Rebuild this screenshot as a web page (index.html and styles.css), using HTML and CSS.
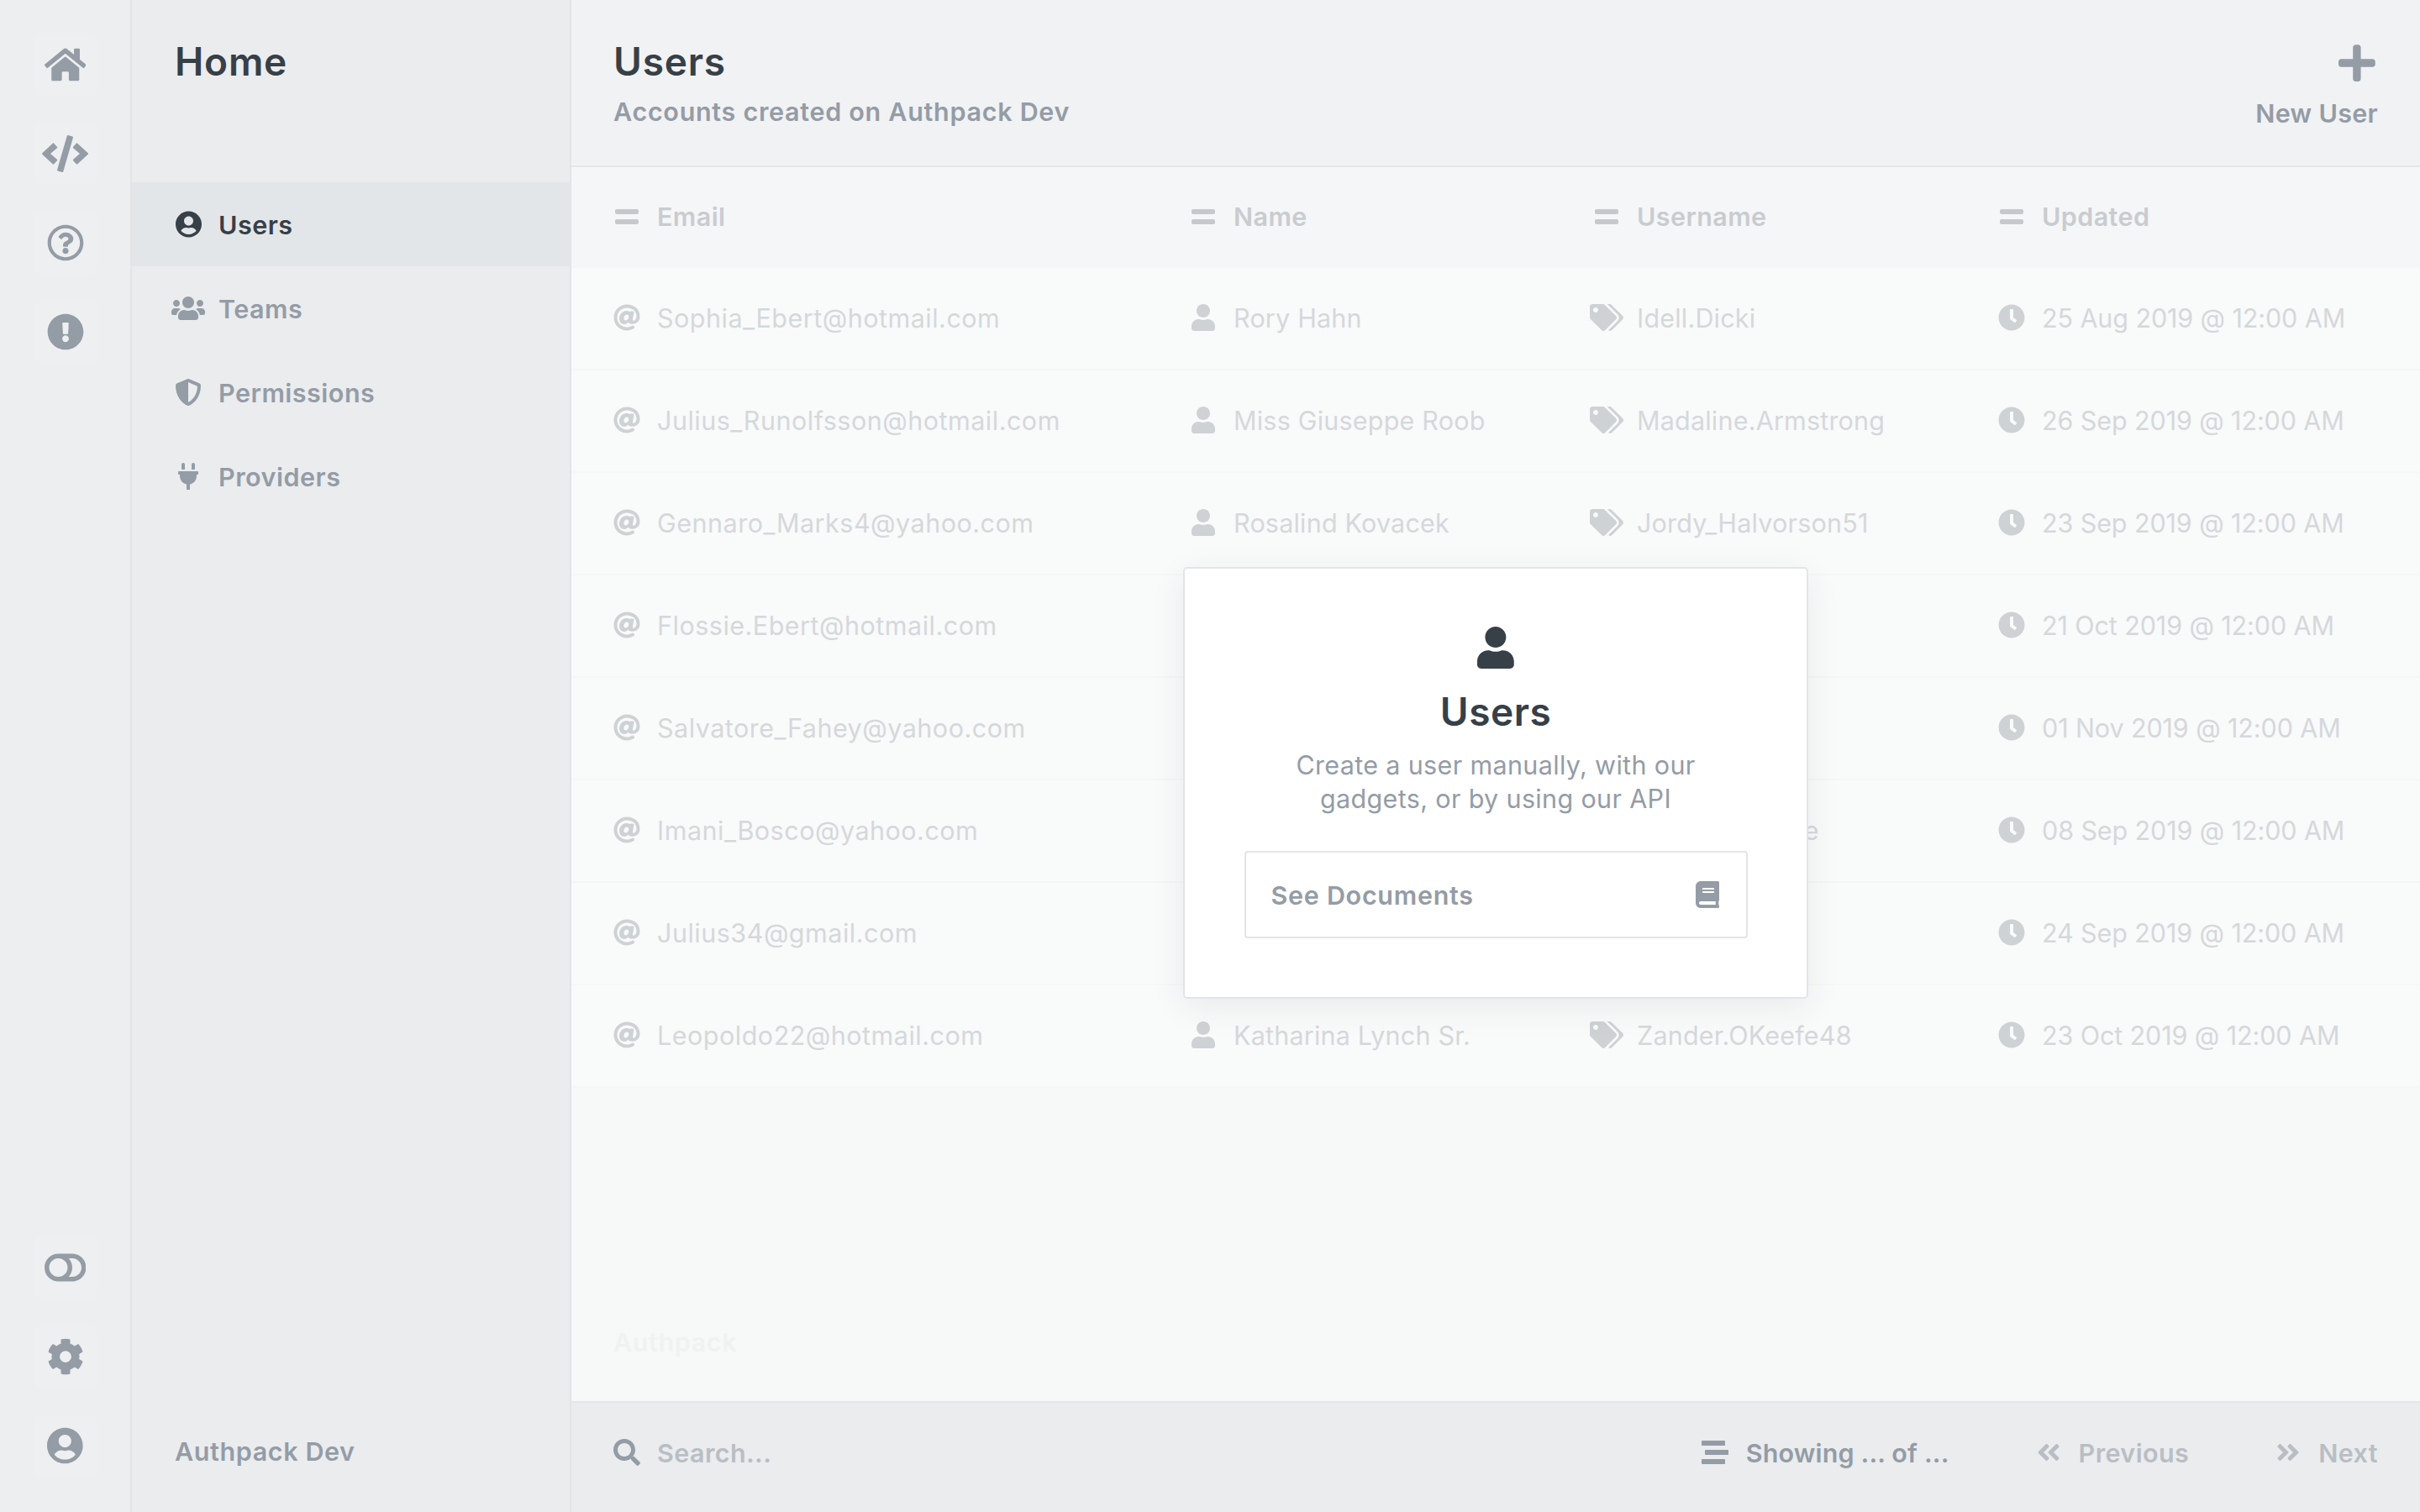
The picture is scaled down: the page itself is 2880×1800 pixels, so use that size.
FILE: index.html
```html
<!DOCTYPE html>
<html lang="en">
<head>
  <meta charset="UTF-8">
  <title>Authpack - Users</title>
  <link rel="stylesheet" href="styles.css">
</head>
<body>
  <svg class="sprite" xmlns="http://www.w3.org/2000/svg">
    <defs>
      <path id="home" d="M280.37 148.26L96 300.11V464a16 16 0 0 0 16 16l112.06-.29a16 16 0 0 0 15.92-16V368a16 16 0 0 1 16-16h64a16 16 0 0 1 16 16v95.64a16 16 0 0 0 16 16.05L464 480a16 16 0 0 0 16-16V300L295.67 148.26a12.19 12.19 0 0 0-15.3 0zM571.6 251.47L488 182.56V44.05a12 12 0 0 0-12-12h-56a12 12 0 0 0-12 12v72.61L318.47 43a48 48 0 0 0-61 0L4.34 251.47a12 12 0 0 0-1.6 16.9l25.5 31A12 12 0 0 0 45.15 301l235.22-193.74a12.19 12.19 0 0 1 15.3 0L530.9 301a12 12 0 0 0 16.9-1.6l25.5-31a12 12 0 0 0-1.7-16.93z"/>
      <path id="code" d="M278.9 511.5l-61-17.7c-6.4-1.8-10-8.5-8.2-14.9L346.2 8.7c1.8-6.4 8.5-10 14.9-8.2l61 17.7c6.4 1.8 10 8.5 8.2 14.9L293.8 503.3c-1.9 6.4-8.5 10.1-14.9 8.2zm-114-112.2l43.5-46.4c4.6-4.9 4.3-12.7-.8-17.2L117 256l90.6-79.7c5.1-4.5 5.5-12.3.8-17.2l-43.5-46.4c-4.5-4.8-12.1-5.1-17-.5L3.8 247.2c-5.1 4.7-5.1 12.8 0 17.5l144.1 135.1c4.9 4.6 12.5 4.4 17-.5zm327.2.6l144.1-135.1c5.1-4.7 5.1-12.8 0-17.5L492.1 112.1c-4.8-4.5-12.4-4.3-17 .5L431.6 159c-4.6 4.9-4.3 12.7.8 17.2L523 256l-90.6 79.7c-5.1 4.5-5.5 12.3-.8 17.2l43.5 46.4c4.5 4.9 12.1 5.1 17 .6z"/>
      <path id="question" d="M256 8C119.043 8 8 119.083 8 256c0 136.997 111.043 248 248 248s248-111.003 248-248C504 119.083 392.957 8 256 8zm0 448c-110.532 0-200-89.431-200-200 0-110.495 89.472-200 200-200 110.491 0 200 89.471 200 200 0 110.53-89.431 200-200 200zm107.244-255.2c0 67.052-72.421 68.084-72.421 92.863V300c0 6.627-5.373 12-12 12h-45.647c-6.627 0-12-5.373-12-12v-8.659c0-35.745 27.1-50.034 47.579-61.516 17.561-9.845 28.324-16.541 28.324-29.579 0-17.246-21.999-28.693-39.784-28.693-23.189 0-33.894 10.977-48.942 29.969-4.057 5.12-11.46 6.071-16.666 2.124l-27.824-21.098c-5.107-3.872-6.251-11.066-2.644-16.363C184.846 131.491 214.94 112 261.794 112c49.071 0 101.45 38.304 101.45 88.8zM298 368c0 23.159-18.841 42-42 42s-42-18.841-42-42 18.841-42 42-42 42 18.841 42 42z"/>
      <path id="alert" d="M504 256c0 136.997-111.043 248-248 248S8 392.997 8 256C8 119.083 119.043 8 256 8s248 111.083 248 248zm-248 50c-25.405 0-46 20.595-46 46s20.595 46 46 46 46-20.595 46-46-20.595-46-46-46zm-43.673-165.346l7.418 136c.347 6.364 5.609 11.346 11.982 11.346h48.546c6.373 0 11.635-4.982 11.982-11.346l7.418-136c.375-6.874-5.098-12.654-11.982-12.654h-63.383c-6.884 0-12.356 5.78-11.981 12.654z"/>
      <path id="toggle" d="M384 64H192C86 64 0 150 0 256s86 192 192 192h192c106 0 192-86 192-192S490 64 384 64zM64 256c0-70.7 57.3-128 128-128s128 57.3 128 128-57.3 128-128 128S64 326.7 64 256zm320 128h-48.9c65.2-72.8 65.2-183.1 0-256H384c70.7 0 128 57.3 128 128s-57.3 128-128 128z"/>
      <path id="cog" d="M487.4 315.7l-42.6-24.6c4.3-23.2 4.3-47 0-70.2l42.6-24.6c4.9-2.8 7.1-8.6 5.5-14-11.1-35.6-30-67.8-54.7-94.6-3.8-4.1-10-5.1-14.8-2.3L380.8 110c-17.9-15.4-38.5-27.3-60.8-35.1V25.8c0-5.6-3.9-10.5-9.4-11.7-36.7-8.2-74.3-7.8-109.2 0-5.5 1.2-9.4 6.1-9.4 11.7V75c-22.2 7.9-42.8 19.8-60.8 35.1L88.7 85.5c-4.9-2.8-11-1.9-14.8 2.3-24.7 26.7-43.6 58.9-54.7 94.6-1.7 5.4.6 11.2 5.5 14L67.3 221c-4.3 23.2-4.3 47 0 70.2l-42.6 24.6c-4.9 2.8-7.1 8.6-5.5 14 11.1 35.6 30 67.8 54.7 94.6 3.8 4.1 10 5.1 14.8 2.3l42.6-24.6c17.9 15.4 38.5 27.3 60.8 35.1v49.2c0 5.6 3.9 10.5 9.4 11.7 36.7 8.2 74.3 7.8 109.2 0 5.5-1.2 9.4-6.1 9.4-11.7v-49.2c22.2-7.9 42.8-19.8 60.8-35.1l42.6 24.6c4.9 2.8 11 1.9 14.8-2.3 24.7-26.7 43.6-58.9 54.7-94.6 1.5-5.5-.7-11.3-5.6-14.1zM256 336c-44.1 0-80-35.9-80-80s35.9-80 80-80 80 35.9 80 80-35.9 80-80 80z"/>
      <path id="user-circle" d="M248 8C111 8 0 119 0 256s111 248 248 248 248-111 248-248S385 8 248 8zm0 96c48.6 0 88 39.4 88 88s-39.4 88-88 88-88-39.4-88-88 39.4-88 88-88zm0 344c-58.7 0-111.3-26.6-146.5-68.2 18.8-35.4 55.6-59.8 98.5-59.8 2.4 0 4.8.4 7.1 1.1 13 4.2 26.6 6.9 40.9 6.9 14.3 0 28-2.7 40.9-6.9 2.3-.7 4.7-1.1 7.1-1.1 42.9 0 79.7 24.4 98.5 59.8C359.3 421.4 306.7 448 248 448z"/>
      <path id="users" d="M96 224c35.3 0 64-28.7 64-64s-28.7-64-64-64-64 28.7-64 64 28.7 64 64 64zm448 0c35.3 0 64-28.7 64-64s-28.7-64-64-64-64 28.7-64 64 28.7 64 64 64zm32 32h-64c-17.6 0-33.5 7.1-45.1 18.6 40.3 22.1 68.9 62 75.1 109.4h66c17.7 0 32-14.3 32-32v-32c0-35.3-28.7-64-64-64zm-256 0c61.9 0 112-50.1 112-112S381.9 32 320 32 208 82.1 208 144s50.1 112 112 112zm76.8 32h-8.3c-20.8 10-43.9 16-68.5 16s-47.6-6-68.5-16h-8.3C179.6 288 128 339.6 128 403.2V432c0 26.5 21.5 48 48 48h288c26.5 0 48-21.5 48-48v-28.8c0-63.6-51.6-115.2-115.2-115.2zm-223.7-13.4C161.5 263.1 145.6 256 128 256H64c-35.3 0-64 28.7-64 64v32c0 17.7 14.3 32 32 32h65.9c6.3-47.4 34.9-87.3 75.2-109.4z"/>
      <path id="shield" d="M466.5 83.7l-192-80a48.15 48.15 0 0 0-36.9 0l-192 80C27.7 91.1 16 108.6 16 128c0 198.5 114.5 335.7 221.5 380.3 11.8 4.9 25.1 4.9 36.9 0C360.1 472.6 496 349.3 496 128c0-19.4-11.7-36.9-29.5-44.3zM256.1 446.3l-.1-381 175.9 73.3c-3.3 151.4-82.1 261.1-175.8 307.7z"/>
      <path id="plug" d="M320,32a32,32,0,0,0-64,0v96h64Zm48,128H16A16,16,0,0,0,0,176v32a16,16,0,0,0,16,16H32v32A160.07,160.07,0,0,0,160,412.8V512h64V412.8A160.07,160.07,0,0,0,352,256V224h16a16,16,0,0,0,16-16V176A16,16,0,0,0,368,160ZM128,32a32,32,0,0,0-64,0v96h64Z"/>
      <path id="at" d="M256 8C118.941 8 8 118.919 8 256c0 137.059 110.919 248 248 248 48.154 0 95.342-14.14 135.408-40.223 12.005-7.815 14.625-24.288 5.552-35.372l-10.177-12.433c-7.671-9.371-21.179-11.667-31.373-5.129C325.92 429.757 291.314 440 256 440c-101.458 0-184-82.542-184-184S154.542 72 256 72c100.139 0 184 57.619 184 160 0 38.786-21.093 79.742-58.17 83.693-17.349-.454-16.91-12.857-13.476-30.024l23.433-121.11C394.653 149.75 383.308 136 368.225 136h-44.981a13.518 13.518 0 0 0-13.432 11.993l-.01.092c-14.697-17.901-40.448-21.775-59.971-21.775-74.58 0-137.831 62.234-137.831 151.46 0 65.303 36.785 105.87 96 105.87 26.984 0 57.369-15.637 74.991-38.333 9.522 34.104 40.613 34.103 70.71 34.103C462.609 379.41 504 307.798 504 232 504 95.653 394.023 8 256 8zm-21.68 304.43c-22.249 0-36.07-15.623-36.07-40.771 0-44.993 30.779-72.729 58.63-72.729 22.292 0 35.601 15.241 35.601 40.77 0 45.061-33.875 72.73-58.161 72.73z"/>
      <path id="user" d="M224 256c70.7 0 128-57.3 128-128S294.7 0 224 0 96 57.3 96 128s57.3 128 128 128zm89.6 32h-16.7c-22.2 10.2-46.9 16-72.9 16s-50.6-5.8-72.9-16h-16.7C60.2 288 0 348.2 0 422.4V464c0 26.5 21.5 48 48 48h352c26.5 0 48-21.5 48-48v-41.6c0-74.2-60.2-134.4-134.4-134.4z"/>
      <path id="tags" d="M497.941 225.941L286.059 14.059A48 48 0 0 0 252.118 0H48C21.49 0 0 21.49 0 48v204.118a48 48 0 0 0 14.059 33.941l211.882 211.882c18.744 18.745 49.136 18.746 67.882 0l204.118-204.118c18.745-18.745 18.745-49.137 0-67.882zM112 160c-26.51 0-48-21.49-48-48s21.49-48 48-48 48 21.49 48 48-21.49 48-48 48zm513.941 133.823L421.823 497.941c-18.745 18.745-49.137 18.745-67.882 0l-.36-.36L527.64 323.522c16.999-16.999 26.36-39.6 26.36-63.64s-9.362-46.641-26.36-63.64L331.397 0h48.721a48 48 0 0 1 33.941 14.059l211.882 211.882c18.745 18.745 18.745 49.137 0 67.882z"/>
      <path id="clock" d="M256,8C119,8,8,119,8,256S119,504,256,504,504,393,504,256,393,8,256,8Zm92.49,313h0l-20,25a16,16,0,0,1-22.49,2.5h0l-67-49.72a40,40,0,0,1-15-31.23V112a16,16,0,0,1,16-16h32a16,16,0,0,1,16,16V256l58,42.5A16,16,0,0,1,348.49,321Z"/>
      <path id="equals" d="M416 304H32c-17.67 0-32 14.33-32 32v32c0 17.67 14.33 32 32 32h384c17.67 0 32-14.33 32-32v-32c0-17.67-14.33-32-32-32zm0-192H32c-17.67 0-32 14.33-32 32v32c0 17.67 14.33 32 32 32h384c17.67 0 32-14.33 32-32v-32c0-17.67-14.33-32-32-32z"/>
      <path id="search" d="M505 442.7L405.3 343c-4.5-4.5-10.6-7-17-7H372c27.6-35.3 44-79.7 44-128C416 93.1 322.9 0 208 0S0 93.1 0 208s93.1 208 208 208c48.3 0 92.7-16.4 128-44v16.3c0 6.4 2.5 12.5 7 17l99.7 99.7c9.4 9.4 24.6 9.4 33.9 0l28.3-28.3c9.4-9.4 9.4-24.6.1-34zM208 336c-70.7 0-128-57.2-128-128 0-70.7 57.2-128 128-128 70.7 0 128 57.2 128 128 0 70.7-57.2 128-128 128z"/>
      <path id="stream" d="M16 128h416c8.84 0 16-7.16 16-16V48c0-8.84-7.16-16-16-16H16C7.16 32 0 39.16 0 48v64c0 8.84 7.16 16 16 16zm480 80H80c-8.84 0-16 7.16-16 16v64c0 8.84 7.16 16 16 16h416c8.84 0 16-7.16 16-16v-64c0-8.84-7.16-16-16-16zm-64 176H16c-8.84 0-16 7.16-16 16v64c0 8.84 7.16 16 16 16h416c8.84 0 16-7.16 16-16v-64c0-8.84-7.16-16-16-16z"/>
      <path id="prev" d="M223.7 239l136-136c9.4-9.4 24.6-9.4 33.9 0l22.6 22.6c9.4 9.4 9.4 24.6 0 33.9L319.9 256l96.4 96.4c9.4 9.4 9.4 24.6 0 33.9L393.7 409c-9.4 9.4-24.6 9.4-33.9 0l-136-136c-9.5-9.4-9.5-24.6-.1-34zm-192 34l136 136c9.4 9.4 24.6 9.4 33.9 0l22.6-22.6c9.4-9.4 9.4-24.6 0-33.9L127.9 256l96.4-96.4c9.4-9.4 9.4-24.6 0-33.9L201.7 103c-9.4-9.4-24.6-9.4-33.9 0l-136 136c-9.5 9.4-9.5 24.6-.1 34z"/>
      <path id="next" d="M224.3 273l-136 136c-9.4 9.4-24.6 9.4-33.9 0l-22.6-22.6c-9.4-9.4-9.4-24.6 0-33.9l96.4-96.4-96.4-96.4c-9.4-9.4-9.4-24.6 0-33.9L54.3 103c9.4-9.4 24.6-9.4 33.9 0l136 136c9.5 9.4 9.5 24.6.1 34zm192-34l-136-136c-9.4-9.4-24.6-9.4-33.9 0l-22.6 22.6c-9.4 9.4-9.4 24.6 0 33.9l96.4 96.4-96.4 96.4c-9.4 9.4-9.4 24.6 0 33.9l22.6 22.6c9.4 9.4 24.6 9.4 33.9 0l136-136c9.5-9.2 9.5-24.4.1-33.8z"/>
      <path id="plus" d="M416 208H272V64c0-17.67-14.33-32-32-32h-32c-17.67 0-32 14.33-32 32v144H32c-17.67 0-32 14.33-32 32v32c0 17.67 14.33 32 32 32h144v144c0 17.67 14.33 32 32 32h32c17.67 0 32-14.33 32-32V304h144c17.67 0 32-14.33 32-32v-32c0-17.67-14.33-32-32-32z"/>
      <path id="book" d="M448 360V24c0-13.3-10.7-24-24-24H96C43 0 0 43 0 96v320c0 53 43 96 96 96h328c13.3 0 24-10.7 24-24v-16c0-7.5-3.5-14.3-8.9-18.7-4.2-15.4-4.2-59.3 0-74.7 5.4-4.3 8.9-11.1 8.9-18.6zM128 134c0-3.3 2.7-6 6-6h212c3.3 0 6 2.7 6 6v20c0 3.3-2.7 6-6 6H134c-3.3 0-6-2.7-6-6v-20zm0 64c0-3.3 2.7-6 6-6h212c3.3 0 6 2.7 6 6v20c0 3.3-2.7 6-6 6H134c-3.3 0-6-2.7-6-6v-20zm253.4 250H96c-17.7 0-32-14.3-32-32 0-17.6 14.4-32 32-32h285.4c-1.9 17.1-1.9 46.9 0 64z"/>
    </defs>
  </svg>

  <div class="app">
    <nav class="rail">
      <div class="rail-group">
        <a class="rail-btn"><svg class="ic" viewBox="0 0 576 512"><use href="#home"/></svg></a>
        <a class="rail-btn"><svg class="ic" viewBox="0 0 640 512"><use href="#code"/></svg></a>
        <a class="rail-btn"><svg class="ic" viewBox="0 0 512 512"><use href="#question"/></svg></a>
        <a class="rail-btn"><svg class="ic" viewBox="0 0 512 512"><use href="#alert"/></svg></a>
      </div>
      <div class="rail-group">
        <a class="rail-btn"><svg class="ic" viewBox="0 0 576 512"><use href="#toggle"/></svg></a>
        <a class="rail-btn"><svg class="ic" viewBox="0 0 512 512"><use href="#cog"/></svg></a>
        <a class="rail-btn"><svg class="ic" viewBox="0 0 496 512"><use href="#user-circle"/></svg></a>
      </div>
    </nav>

    <aside class="sidebar">
      <h2 class="sidebar-title">Home</h2>
      <ul class="menu">
        <li class="menu-item active"><span class="icon-box"><svg class="ic" viewBox="0 0 496 512"><use href="#user-circle"/></svg></span>Users</li>
        <li class="menu-item"><span class="icon-box"><svg class="ic" viewBox="0 0 640 512"><use href="#users"/></svg></span>Teams</li>
        <li class="menu-item"><span class="icon-box"><svg class="ic" viewBox="0 0 512 512"><use href="#shield"/></svg></span>Permissions</li>
        <li class="menu-item"><span class="icon-box"><svg class="ic" viewBox="0 0 384 512"><use href="#plug"/></svg></span>Providers</li>
      </ul>
      <div class="sidebar-foot">Authpack Dev</div>
    </aside>

    <main class="main">
      <header class="topbar">
        <div>
          <h1 class="topbar-title">Users</h1>
          <p class="topbar-sub">Accounts created on Authpack Dev</p>
        </div>
        <a class="new-btn">
          <svg class="ic" viewBox="0 0 448 512"><use href="#plus"/></svg>
          <span>New User</span>
        </a>
      </header>

      <section class="content">
        <div class="row head">
          <div class="cell"><span class="icon-box"><svg class="ic" viewBox="0 0 448 512"><use href="#equals"/></svg></span>Email</div>
          <div class="cell"><span class="icon-box"><svg class="ic" viewBox="0 0 448 512"><use href="#equals"/></svg></span>Name</div>
          <div class="cell"><span class="icon-box"><svg class="ic" viewBox="0 0 448 512"><use href="#equals"/></svg></span>Username</div>
          <div class="cell"><span class="icon-box"><svg class="ic" viewBox="0 0 448 512"><use href="#equals"/></svg></span>Updated</div>
        </div>

        <div class="row">
          <div class="cell email"><span class="icon-box"><svg class="ic" viewBox="0 0 512 512"><use href="#at"/></svg></span>Sophia_Ebert@hotmail.com</div>
          <div class="cell"><span class="icon-box"><svg class="ic" viewBox="0 0 448 512"><use href="#user"/></svg></span>Rory Hahn</div>
          <div class="cell"><span class="icon-box"><svg class="ic" viewBox="0 0 640 512"><use href="#tags"/></svg></span>Idell.Dicki</div>
          <div class="cell date"><span class="icon-box"><svg class="ic" viewBox="0 0 512 512"><use href="#clock"/></svg></span>25 Aug 2019 @ 12:00 AM</div>
        </div>
        <div class="row">
          <div class="cell email"><span class="icon-box"><svg class="ic" viewBox="0 0 512 512"><use href="#at"/></svg></span>Julius_Runolfsson@hotmail.com</div>
          <div class="cell"><span class="icon-box"><svg class="ic" viewBox="0 0 448 512"><use href="#user"/></svg></span>Miss Giuseppe Roob</div>
          <div class="cell"><span class="icon-box"><svg class="ic" viewBox="0 0 640 512"><use href="#tags"/></svg></span>Madaline.Armstrong</div>
          <div class="cell date"><span class="icon-box"><svg class="ic" viewBox="0 0 512 512"><use href="#clock"/></svg></span>26 Sep 2019 @ 12:00 AM</div>
        </div>
        <div class="row">
          <div class="cell email"><span class="icon-box"><svg class="ic" viewBox="0 0 512 512"><use href="#at"/></svg></span>Gennaro_Marks4@yahoo.com</div>
          <div class="cell"><span class="icon-box"><svg class="ic" viewBox="0 0 448 512"><use href="#user"/></svg></span>Rosalind Kovacek</div>
          <div class="cell"><span class="icon-box"><svg class="ic" viewBox="0 0 640 512"><use href="#tags"/></svg></span>Jordy_Halvorson51</div>
          <div class="cell date"><span class="icon-box"><svg class="ic" viewBox="0 0 512 512"><use href="#clock"/></svg></span>23 Sep 2019 @ 12:00 AM</div>
        </div>
        <div class="row">
          <div class="cell email"><span class="icon-box"><svg class="ic" viewBox="0 0 512 512"><use href="#at"/></svg></span>Flossie.Ebert@hotmail.com</div>
          <div class="cell"></div>
          <div class="cell"></div>
          <div class="cell date"><span class="icon-box"><svg class="ic" viewBox="0 0 512 512"><use href="#clock"/></svg></span>21 Oct 2019 @ 12:00 AM</div>
        </div>
        <div class="row">
          <div class="cell email"><span class="icon-box"><svg class="ic" viewBox="0 0 512 512"><use href="#at"/></svg></span>Salvatore_Fahey@yahoo.com</div>
          <div class="cell"></div>
          <div class="cell"></div>
          <div class="cell date"><span class="icon-box"><svg class="ic" viewBox="0 0 512 512"><use href="#clock"/></svg></span>01 Nov 2019 @ 12:00 AM</div>
        </div>
        <div class="row">
          <div class="cell email"><span class="icon-box"><svg class="ic" viewBox="0 0 512 512"><use href="#at"/></svg></span>Imani_Bosco@yahoo.com</div>
          <div class="cell"></div>
          <div class="cell"><span class="icon-box"></span>Xander.OKeefe</div>
          <div class="cell date"><span class="icon-box"><svg class="ic" viewBox="0 0 512 512"><use href="#clock"/></svg></span>08 Sep 2019 @ 12:00 AM</div>
        </div>
        <div class="row">
          <div class="cell email"><span class="icon-box"><svg class="ic" viewBox="0 0 512 512"><use href="#at"/></svg></span>Julius34@gmail.com</div>
          <div class="cell"></div>
          <div class="cell"></div>
          <div class="cell date"><span class="icon-box"><svg class="ic" viewBox="0 0 512 512"><use href="#clock"/></svg></span>24 Sep 2019 @ 12:00 AM</div>
        </div>
        <div class="row">
          <div class="cell email"><span class="icon-box"><svg class="ic" viewBox="0 0 512 512"><use href="#at"/></svg></span>Leopoldo22@hotmail.com</div>
          <div class="cell"><span class="icon-box"><svg class="ic" viewBox="0 0 448 512"><use href="#user"/></svg></span>Katharina Lynch Sr.</div>
          <div class="cell"><span class="icon-box"><svg class="ic" viewBox="0 0 640 512"><use href="#tags"/></svg></span>Zander.OKeefe48</div>
          <div class="cell date"><span class="icon-box"><svg class="ic" viewBox="0 0 512 512"><use href="#clock"/></svg></span>23 Oct 2019 @ 12:00 AM</div>
        </div>

        <div class="brand">Authpack</div>

        <div class="overlay">
          <div class="modal">
            <svg class="ic modal-icon" viewBox="0 0 448 512"><use href="#user"/></svg>
            <h3 class="modal-title">Users</h3>
            <p class="modal-text">Create a user manually, with our<br>gadgets, or by using our API</p>
            <a class="doc-btn">
              <span>See Documents</span>
              <svg class="ic" viewBox="0 0 448 512"><use href="#book"/></svg>
            </a>
          </div>
        </div>
      </section>

      <footer class="bottombar">
        <div class="search"><span class="icon-box"><svg class="ic" viewBox="0 0 512 512"><use href="#search"/></svg></span>Search...</div>
        <div class="pager">
          <div class="pager-item count"><svg class="ic" viewBox="0 0 512 512"><use href="#stream"/></svg>Showing ... of ...</div>
          <div class="pager-item"><svg class="ic" viewBox="0 0 448 512"><use href="#prev"/></svg>Previous</div>
          <div class="pager-item"><svg class="ic" viewBox="0 0 448 512"><use href="#next"/></svg>Next</div>
        </div>
      </footer>
    </main>
  </div>
</body>
</html>
```

FILE: styles.css
```css
* {
  box-sizing: border-box;
}

body {
  margin: 0;
  font-family: Inter, "Noto Sans", sans-serif;
  font-size: 30.5px;
  color: #949ca6;
}

h1, h2, h3, p, ul {
  margin: 0;
  padding: 0;
}

.sprite {
  display: none;
}

.ic {
  display: block;
  height: 32px;
  flex: none;
  fill: currentColor;
}

.icon-box {
  width: 32px;
  height: 32px;
  flex: none;
  display: flex;
  justify-content: center;
}

.app {
  display: flex;
  height: 1800px;
}

/* left icon rail */
.rail {
  width: 157px;
  flex: none;
  padding: 40px 0 42px;
  display: flex;
  flex-direction: column;
  justify-content: space-between;
  align-items: center;
  background: #edeef0;
  border-right: 2px solid #e2e4e7;
}

.rail-group {
  display: flex;
  flex-direction: column;
  gap: 32px;
}

.rail-btn {
  width: 74px;
  height: 74px;
  display: flex;
  align-items: center;
  justify-content: center;
  border-radius: 6px;
  background: #eeeff1;
}

.rail-btn .ic {
  height: 44px;
}

/* second column */
.sidebar {
  width: 523px;
  flex: none;
  display: flex;
  flex-direction: column;
  background: #ebecee;
  border-right: 2px solid #e2e4e7;
}

.sidebar-title {
  height: 217px;
  padding: 44px 0 0 51px;
  font-size: 46px;
  line-height: 58px;
  font-weight: 600;
  letter-spacing: 0.8px;
  color: #373f47;
}

.menu {
  list-style: none;
}

.menu-item {
  height: 100px;
  padding-left: 51px;
  display: flex;
  align-items: center;
  gap: 20px;
  font-weight: 600;
  letter-spacing: 0.5px;
}

.menu-item.active {
  background: #e3e6e8;
  color: #373f47;
}

.sidebar-foot {
  margin-top: auto;
  padding: 0 0 52px 51px;
  line-height: 40px;
  font-weight: 600;
  letter-spacing: 0.6px;
}

/* main area */
.main {
  flex: 1;
  min-width: 0;
  display: flex;
  flex-direction: column;
}

.topbar {
  height: 199px;
  flex: none;
  padding: 44px 50px 0;
  display: flex;
  justify-content: space-between;
  background: #f1f2f4;
  border-bottom: 2px solid #e4e6e9;
}

.topbar-title {
  font-size: 46px;
  line-height: 58px;
  font-weight: 600;
  letter-spacing: 0.8px;
  color: #373f47;
}

.topbar-sub {
  margin-top: 11px;
  line-height: 40px;
  font-weight: 600;
  letter-spacing: 0.7px;
}

.new-btn {
  margin-top: 6px;
  display: flex;
  flex-direction: column;
  align-items: flex-end;
  font-weight: 600;
  line-height: 40px;
  letter-spacing: 0.3px;
}

.new-btn .ic {
  height: 50px;
  margin: 0 3px 15px 0;
}

.content {
  flex: 1;
  position: relative;
  display: flex;
  flex-direction: column;
  background: #f7f8f8;
}

.row {
  height: 122px;
  flex: none;
  padding: 0 0 2px 50px;
  display: grid;
  grid-template-columns: 686px 480px 482px 1fr;
  align-items: center;
  background: #f9fafa;
  border-bottom: 2px solid #f5f6f6;
  color: #d5d8db;
  letter-spacing: 0.2px;
}

.row.head {
  height: 120px;
  padding-bottom: 3px;
  background: #f5f6f8;
  border-bottom: 0;
  font-weight: 600;
  color: #c9cccf;
  letter-spacing: 0.4px;
}

.row .ic {
  color: #cfd2d5;
}

.row.head .ic {
  color: #c6c9cc;
}

.cell {
  display: flex;
  align-items: center;
  gap: 20px;
  white-space: nowrap;
}

.email {
  letter-spacing: 0.5px;
}

.date {
  letter-spacing: -0.1px;
}

.brand {
  margin-top: auto;
  padding: 0 50px 50px;
  line-height: 40px;
  font-weight: 600;
  letter-spacing: 0.6px;
  color: #f0f2f2;
}

/* users popup */
.overlay {
  position: absolute;
  inset: 0 0 3px;
  display: flex;
  align-items: center;
  justify-content: center;
}

.modal {
  width: 744px;
  height: 514px;
  padding: 69px 72px 0;
  display: flex;
  flex-direction: column;
  align-items: center;
  background: #fff;
  border: 2px solid #e2e5e8;
  border-radius: 5px;
  box-shadow: 0 10px 40px rgba(55, 63, 71, 0.08);
}

.modal-icon {
  height: 50px;
  color: #373f47;
}

.modal-title {
  margin-top: 22px;
  font-size: 46px;
  line-height: 58px;
  font-weight: 600;
  letter-spacing: 0.5px;
  color: #373f47;
}

.modal-text {
  margin-top: 15px;
  line-height: 40px;
  text-align: center;
  letter-spacing: 0.35px;
}

.doc-btn {
  width: 599px;
  height: 104px;
  margin-top: 42px;
  padding: 0 32px 0 30px;
  flex: none;
  display: flex;
  align-items: center;
  justify-content: space-between;
  border: 2px solid #e2e5e8;
  border-radius: 4px;
  font-weight: 600;
  letter-spacing: 0.7px;
}

/* bottom bar */
.bottombar {
  height: 132px;
  flex: none;
  padding: 0 50px 12px;
  display: flex;
  align-items: center;
  justify-content: space-between;
  background: #ebecee;
  border-top: 2px solid #e4e6e9;
  font-weight: 600;
  letter-spacing: 0.4px;
  color: #b9bec5;
}

.search {
  display: flex;
  align-items: center;
  gap: 20px;
}

.search .ic,
.count {
  color: #949ca6;
}

.pager {
  display: flex;
  align-items: center;
  gap: 104px;
}

.pager-item {
  display: flex;
  align-items: center;
  gap: 22px;
}

.pager-item.count {
  gap: 21px;
  letter-spacing: 0.15px;
}
```
